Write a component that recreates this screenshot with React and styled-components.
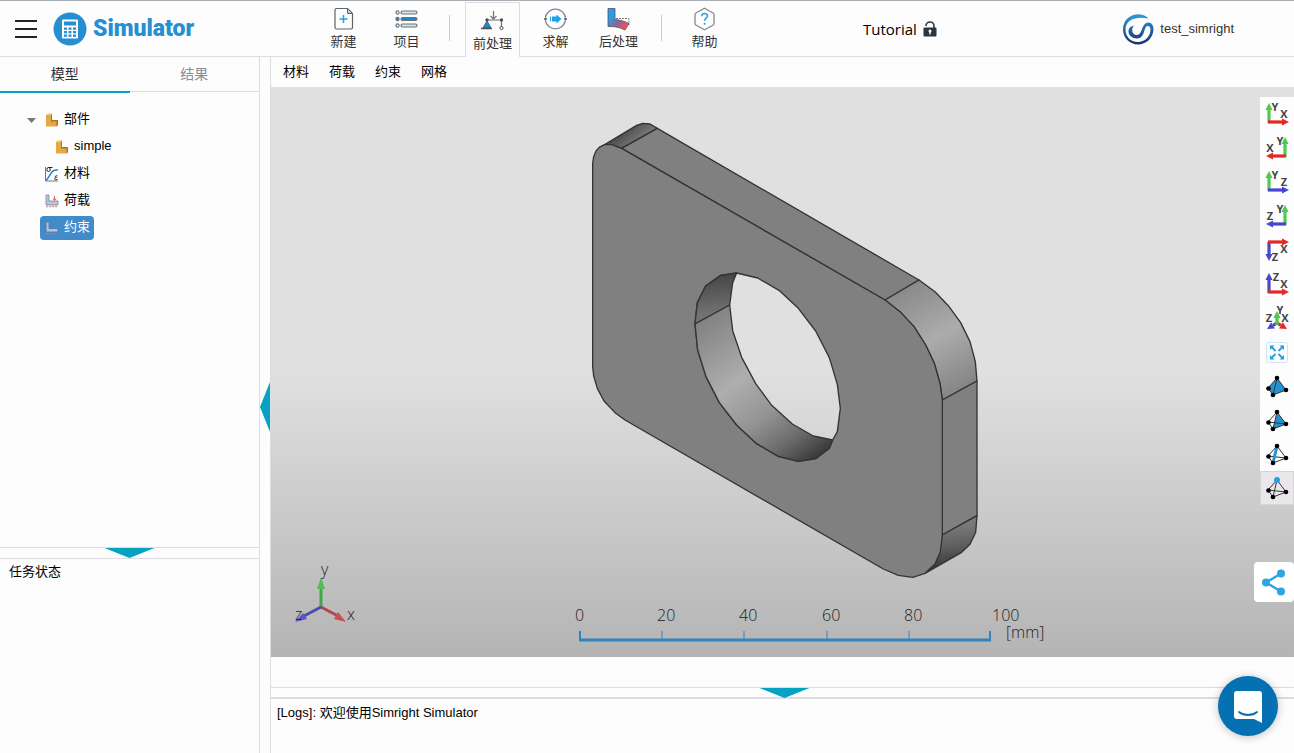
import { useState } from "react";
import styled, { createGlobalStyle, css } from "styled-components";

const colors = {
  accent: "#05a2c2",
  logo: "#268fd1",
  border: "#dcdde0",
  text: "#000000",
  label: "#333333",
  muted: "#868e96",
  selected: "#428bca",
  ruler: "#2f86bf",
  red: "#e32828",
  green: "#4fc94f",
  blue: "#4646cf",
  mesh: "#2592d0",
};

const GlobalStyle = createGlobalStyle`
  * {
    box-sizing: border-box;
  }

  body {
    margin: 0;
    background: #fdfdfd;
    color: ${colors.text};
    font-family: "Liberation Sans", "Noto Sans CJK SC", sans-serif;
    font-size: 13px;
  }

  button {
    margin: 0;
    padding: 0;
    border: 0;
    background: none;
    color: inherit;
    font: inherit;
    cursor: pointer;
  }

  svg {
    display: block;
  }
`;

/* ---------- header icons ---------- */

const NewIcon = () => (
  <svg width="23" height="24" viewBox="0 0 23 24" fill="none">
    <path
      d="M4.500 1.500h11l5 5v14a1.500 1.500 0 0 1-1.500 1.500h-14.500a1.500 1.500 0 0 1-1.500-1.500v-17.500a1.500 1.500 0 0 1 1.500-1.500z"
      stroke="#5b646c"
      strokeWidth="1.200"
    />
    <path d="M15.500 1.500v5h5z" fill="#c9ced2" stroke="#5b646c" />
    <path d="M11.500 8v8M7.500 12h8" stroke="#23a3dd" strokeWidth="1.500" />
  </svg>
);

const ProjectIcon = () => (
  <svg width="23" height="24" viewBox="0 0 23 24">
    {[5.5, 12, 18.5].map((y, i) => (
      <g key={y} stroke="#6b747b" strokeWidth="1.200">
        <circle cx="2.500" cy={y} r="1.600" fill={i === 1 ? "#1b87c6" : "#fff"} />
        <rect
          x="6"
          y={y - 1.5}
          width="16"
          height="3"
          rx="1.500"
          fill={i === 1 ? "#1b87c6" : "#dfe2e4"}
        />
      </g>
    ))}
  </svg>
);

const PreIcon = () => (
  <svg width="23" height="24" viewBox="0 0 23 24" fill="none">
    <path d="M5 11h15.500v8M12.500 2v8M9.500 7l3 3 3-3" stroke="#6b7278" strokeWidth="1.200" />
    <path d="M6 12l4 7H2z" fill="#1e8bcd" stroke="#3c5d75" />
    <path d="M0 19.500h11" stroke="#4b5258" strokeWidth="1.500" />
    <g fill="#4b5258">
      <circle cx="6" cy="11" r="1.700" />
      <circle cx="20.500" cy="11" r="1.700" />
    </g>
    <circle cx="20.500" cy="19" r="1.600" fill="#fff" stroke="#4b5258" />
  </svg>
);

const SolveIcon = () => (
  <svg width="23" height="24" viewBox="0 0 23 24" fill="none">
    <path
      d="M1.300 10.500a10.300 10.300 0 0 1 20.200 0M21.500 13.500a10.300 10.300 0 0 1-20.200 0"
      stroke="#80878d"
      strokeWidth="1.300"
    />
    <circle cx="1.500" cy="12" r="1.300" fill="#4b5258" />
    <circle cx="21.500" cy="12" r="1.300" fill="#4b5258" />
    <path d="M8 9.500h4.500V7.500l5 4.500-5 4.500v-2H8z" fill="#1fa4e3" />
    <path d="M6.500 9.500v5" stroke="#1fa4e3" />
  </svg>
);

const PostIcon = () => (
  <svg width="23" height="24" viewBox="0 0 23 24">
    <defs>
      <linearGradient id="bend" x1="0" y1="0" x2="1" y2="1">
        <stop offset="0.300" stopColor="#2c9be3" />
        <stop offset="0.550" stopColor="#83699b" />
        <stop offset="0.800" stopColor="#e9525c" />
      </linearGradient>
    </defs>
    <path d="M9 11.500h13V18" fill="none" stroke="#777" strokeDasharray="2 1" />
    <path
      d="M1 1.500h7v11c5 .5 9 1.500 14 4l-4 6.500c-6-3-10-3.500-17-3.500z"
      fill="url(#bend)"
      stroke="#56505f"
      strokeWidth="0.800"
    />
  </svg>
);

const HelpIcon = () => (
  <svg width="23" height="24" viewBox="0 0 23 24" fill="none">
    <path
      d="M11.500 1.300l8.300 4.400q1.200.7 1.200 2v8.600q0 1.300-1.200 2l-8.300 4.400-8.300-4.400q-1.200-.7-1.200-2V7.700q0-1.300 1.200-2z"
      stroke="#838a90"
      strokeWidth="1.300"
    />
    <path
      d="M8.700 9.200c0-3.800 5.800-3.600 5.800-.2 0 2-2.900 2.400-2.900 4.800"
      stroke="#23a3dd"
      strokeWidth="1.500"
    />
    <circle cx="11.600" cy="16.700" r="1" fill="#23a3dd" />
  </svg>
);

const SimulatorMark = () => (
  <svg width="34" height="34" viewBox="0 0 34 34">
    <circle cx="17" cy="17" r="16.500" fill={colors.logo} />
    <rect x="9" y="7.500" width="16" height="19" rx="1" fill="#fff" />
    <rect x="11" y="9.500" width="12" height="4" fill={colors.logo} />
    <g fill={colors.logo}>
      {[15.5, 19, 22.5].map((y) =>
        [11, 15.5, 20].map((x) => (
          <rect key={`${x}-${y}`} x={x} y={y} width="3" height="2.300" />
        ))
      )}
    </g>
  </svg>
);

const LockIcon = () => (
  <svg width="14" height="16" viewBox="0 0 14 16">
    <path d="M3 5a4 4 0 0 1 8 0v2" fill="none" stroke="#2b363e" strokeWidth="1.600" />
    <rect x="0.500" y="6.500" width="13" height="9" rx="1" fill="#2b363e" />
    <circle cx="7" cy="10" r="1.500" fill="#fff" />
    <path d="M7 10v3.500" stroke="#fff" strokeWidth="1.300" />
  </svg>
);

const SimrightMark = () => (
  <svg width="32" height="32" viewBox="0 0 32 32">
    <defs>
      <linearGradient id="ring" x1="0" y1="0" x2="0" y2="1">
        <stop offset="0" stopColor="#2d9cdb" />
        <stop offset="1" stopColor="#16306e" />
      </linearGradient>
    </defs>
    <path
      d="M26.500 5.500C18-3 1 2 1 16.500 1 25 8 31.500 16 31.500S31.500 25 31.500 16c0-3.500-2-6.500-5-6.500-7.500 0-5.500 12.500-11.500 12.500-3.500 0-5.500-3-4.500-7l1.500-2.500c-4 1-5.500 3-5.500 6 0 4 4 7 8.500 7 8.500 0 6.500-12.500 10.500-12.500 2 0 3 1.500 3 3.500 0 7-6 12.500-12.500 12.500C8.500 29 3.500 23.500 3.500 16.500 3.500 6 15 3 26.500 5.500z"
      fill="url(#ring)"
    />
  </svg>
);

/* ---------- tree icons ---------- */

const PartIcon = () => (
  <svg width="14" height="14" viewBox="0 0 14 14">
    <path d="M1 2l2-1.500h4V7h6v5l-1.500 1.500H1z" fill="#e6a745" />
    <path d="M1 2h5l1-1.500H3z" fill="#f7d58f" />
    <path d="M6 2l1-1.500V7l-1 1.500zM6 8.500L7 7h6l-1.500 1.500zM11.500 8.500L13 7v5l-1.500 1.500z" fill="#a8742a" />
  </svg>
);

const MaterialIcon = () => (
  <svg width="15" height="16" viewBox="0 0 15 16" fill="none">
    <path d="M1.500 1v14H14" stroke="#777" />
    <path d="M2 14.500C7 9 7 3 14 4" stroke="#2a7fd0" strokeWidth="1.500" />
    <ellipse cx="4.500" cy="3.500" rx="1.700" ry="2" stroke="#222" />
    <path d="M4.500 1.500H8.500M13.500 10c-2.500-1-3 1.500-1 1.500-2.500 0-3 3 1 2" stroke="#222" />
  </svg>
);

const LoadIcon = () => (
  <svg width="14" height="14" viewBox="0 0 14 14">
    <path d="M1 1h3v6h9v4H1z" fill="#b4c5de" stroke="#7d8598" strokeWidth="0.800" />
    <path d="M9.500 2v4M8 4.500l1.500 2 1.500-2" fill="none" stroke="#d0606a" />
    <path d="M1 12.500h12" stroke="#d79a9f" strokeWidth="1.500" strokeDasharray="2 1" />
  </svg>
);

const ConstraintIcon = () => (
  <svg width="14" height="14" viewBox="0 0 14 14">
    <path d="M1 1h3v6.500h9v3.500H1z" fill="#a9c4e6" stroke="#5e6f8e" strokeWidth="0.800" />
    <path d="M1 12.500h12" stroke="#a9848f" strokeWidth="1.500" strokeDasharray="2 1" />
  </svg>
);

const CaretIcon = () => (
  <svg width="9" height="5" viewBox="0 0 9 5">
    <path d="M0 0h9L4.500 5z" fill="#777" />
  </svg>
);

/* ---------- view toolbar icons ---------- */

const Arrow = ({ from, to, color }) => {
  const [x1, y1] = from;
  const [x2, y2] = to;
  const len = Math.hypot(x2 - x1, y2 - y1);
  const ux = (x2 - x1) / len;
  const uy = (y2 - y1) / len;
  const bx = x2 - ux * 7;
  const by = y2 - uy * 7;
  return (
    <g fill={color} stroke={color}>
      <path d={`M${x1} ${y1}L${bx} ${by}`} strokeWidth="3.200" />
      <path
        stroke="none"
        d={`M${x2} ${y2}L${bx - uy * 3.6} ${by + ux * 3.6}L${bx + uy * 3.6} ${by - ux * 3.6}z`}
      />
    </g>
  );
};

const AxisIcon = ({ arrows, letters }) => (
  <svg width="34" height="34" viewBox="0 0 34 34">
    {arrows.map((arrow, i) => (
      <Arrow key={i} {...arrow} />
    ))}
    {letters.map(([letter, x, y]) => (
      <AxisLetter key={letter} x={x} y={y}>
        {letter}
      </AxisLetter>
    ))}
  </svg>
);

const FitIcon = () => (
  <svg width="34" height="34" viewBox="0 0 34 34">
    <rect x="6.500" y="7.500" width="21" height="20" rx="2" fill="#fbfdff" stroke="#cfe4f5" />
    <path
      d="M11 11.500l4.500 4.500M23 11.500L18.500 16M11 23.500l4.500-4.500M23 23.500L18.500 19"
      stroke="#2b9ddb"
      strokeWidth="1.800"
    />
    <path
      d="M10 10.500h4.500l-4.500 4.500zM24 10.500h-4.500l4.500 4.500zM10 24.500h4.500l-4.500-4.500zM24 24.500h-4.500l4.500-4.500z"
      fill="#2b9ddb"
    />
  </svg>
);

const MeshIcon = ({ kind }) => (
  <svg width="34" height="34" viewBox="0 0 34 34">
    {kind === "solid" && <path d="M17 9L8 19l5 7 13-5z" fill={colors.mesh} />}
    {kind === "face" && <path d="M17 9l-4 17 13-5z" fill={colors.mesh} />}
    <g stroke="#333" fill="none">
      <path d="M17 9L8 19l5 7 13-5zM17 9l-4 17" />
      {kind !== "solid" && <path d="M8 19l18 2" />}
    </g>
    {kind === "edge" && <path d="M17 9l-4 17" stroke={colors.mesh} strokeWidth="3" />}
    <circle cx="17" cy="9" r={kind === "node" ? 3 : 2.3} fill={kind === "node" ? "#2a9fe0" : "#000"} />
    <circle cx="8.500" cy="19.500" r="2.300" />
    <circle cx="26" cy="21" r="2.300" />
    <circle cx="13" cy="26" r="2.300" />
  </svg>
);

const ShareIcon = () => (
  <svg width="40" height="40" viewBox="0 0 40 40" fill="#2ba6e0">
    <path d="M27 11.500L12 20.500l15 9" fill="none" stroke="#2ba6e0" strokeWidth="2.500" />
    <circle cx="27" cy="11.500" r="4" />
    <circle cx="12" cy="20.500" r="4" />
    <circle cx="27" cy="29.500" r="4" />
  </svg>
);

const ChatIcon = () => (
  <svg width="60" height="60" viewBox="0 0 60 60">
    <path d="M19 15h22a3 3 0 0 1 3 3v29l-8-4H19a3 3 0 0 1-3-3V18a3 3 0 0 1 3-3z" fill="#fff" />
    <path d="M21 36c5 4 13 4 18 0" fill="none" stroke="#0571b3" strokeWidth="1.800" strokeLinecap="round" />
  </svg>
);

/* ---------- scene ---------- */

const PartModel = () => (
  <svg width="395" height="460" viewBox="45 60 1185 1380">
    <defs>
      <linearGradient id="cornerTop" gradientUnits="userSpaceOnUse" x1="160" y1="85" x2="195" y2="130">
        <stop offset="0" stopColor="#464646" />
        <stop offset="1" stopColor="#777777" />
      </linearGradient>
      <linearGradient id="cornerRight" gradientUnits="userSpaceOnUse" x1="1000" y1="570" x2="1170" y2="870">
        <stop offset="0" stopColor="#8b8a8b" />
        <stop offset="0.500" stopColor="#acacac" />
        <stop offset="1" stopColor="#868586" />
      </linearGradient>
      <linearGradient id="cornerBottom" gradientUnits="userSpaceOnUse" x1="1150" y1="1280" x2="1165" y2="1385">
        <stop offset="0" stopColor="#7a797a" />
        <stop offset="0.600" stopColor="#5d5c5d" />
        <stop offset="1" stopColor="#3f3f3f" />
      </linearGradient>
      <linearGradient id="holeTop" gradientUnits="userSpaceOnUse" x1="425" y1="530" x2="435" y2="640">
        <stop offset="0" stopColor="#484748" />
        <stop offset="1" stopColor="#737273" />
      </linearGradient>
      <linearGradient id="holeWall" gradientUnits="userSpaceOnUse" x1="420" y1="640" x2="730" y2="1070">
        <stop offset="0" stopColor="#828182" />
        <stop offset="0.400" stopColor="#aeaeae" />
        <stop offset="0.650" stopColor="#959495" />
        <stop offset="0.850" stopColor="#6c6b6c" />
        <stop offset="1" stopColor="#3e3d3e" />
      </linearGradient>
    </defs>
    <g stroke="#333333" strokeWidth="4" strokeLinejoin="round" fill="#808080">
      <path
        d="M88 143L104 134 200 76 218 70 240 72 262 85 155 145 125 134z"
        fill="url(#cornerTop)"
      />
      <path d="M155 145L262 85 1047 540 945 600z" />
      <path
        d="M945 600L1047 540 1095 575 1135 617 1172 668 1200 725 1216 785 1221 843 1117 900 1110 850 1093 790 1067 735 1032 680 990 635z"
        fill="url(#cornerRight)"
      />
      <path d="M1117 900L1221 843V1247L1117 1305z" />
      <path
        d="M1117 1305L1221 1247 1217 1297 1200 1333 1175 1357 1065 1420 1095 1392 1110 1350z"
        fill="url(#cornerBottom)"
      />
      <path
        fillRule="evenodd"
        d="M68 190L71 170 78 153 88 142 104 134 125 134 155 145 945 600 990 635 1032 680 1067 735 1093 790 1110 850 1117 900V1305L1111 1355 1095 1392 1065 1420 1028 1432 985 1426 940 1407 165 960 135 938 102 903 82 865 71 828 68 800z
        M375 672L383 750 408 830 448 908 500 975 560 1031 625 1069 685 1084 737 1076 778 1045 788 1020 802 995 811 925 802 853 778 773 737 693 685 625 627 571 563 534 500 519 452 526 407 558 382 608z"
      />
      <path d="M375 672L382 608 407 558 452 526 500 519 488 548 479 615z" fill="url(#holeTop)" />
      <path
        d="M375 672L479 615 488 692 515 772 557 851 605 916 667 972 730 1008 788 1020 778 1045 737 1076 685 1084 625 1069 560 1031 500 975 448 908 408 830 383 750z"
        fill="url(#holeWall)"
      />
    </g>
  </svg>
);

const TriadModel = () => (
  <svg width="76" height="76" viewBox="0 -10 76 76">
    <path d="M31 46V24" stroke="#44a64c" strokeWidth="3" />
    <path d="M31 16l4 12h-8z" fill="#52bd56" />
    <path d="M31 46l17 9" stroke="#b24848" strokeWidth="3" />
    <path d="M56 61l-12-3 4-7z" fill="#c85050" />
    <path d="M31 46l-17 9" stroke="#4c4cae" strokeWidth="3" />
    <path d="M5 61l12-3-4-6z" fill="#5858c4" />
    <SceneText x="31" y="14">y</SceneText>
    <SceneText x="5" y="59">z</SceneText>
    <SceneText x="57" y="59">x</SceneText>
  </svg>
);

const marks = [
  { value: 0, tick: 70, x: 65 },
  { value: 20, tick: 152, x: 147 },
  { value: 40, tick: 234, x: 229 },
  { value: 60, tick: 317, x: 312 },
  { value: 80, tick: 399, x: 394 },
  { value: 100, tick: 480, x: 482 },
];

const RulerScale = () => (
  <svg width="545" height="48" viewBox="0 0 545 48">
    <path d="M69 40H481" stroke={colors.ruler} strokeWidth="3" />
    {marks.map(({ value, tick, x }) => (
      <g key={value}>
        <path
          d={`M${tick} 31v9`}
          stroke={colors.ruler}
          strokeWidth={value % 100 === 0 ? 2 : 1}
        />
        <SceneText x={x} y="21">{value}</SceneText>
      </g>
    ))}
    <SceneText x="496" y="38">[mm]</SceneText>
  </svg>
);

/* ---------- data ---------- */

const navItems = [
  { label: "新建", icon: <NewIcon /> },
  { label: "项目", icon: <ProjectIcon />, divided: true },
  { label: "前处理", icon: <PreIcon />, active: true },
  { label: "求解", icon: <SolveIcon /> },
  { label: "后处理", icon: <PostIcon />, divided: true },
  { label: "帮助", icon: <HelpIcon /> },
];

const menuItems = ["材料", "荷载", "约束", "网格"];

const treeItems = [
  { label: "部件", icon: <PartIcon />, open: true },
  { label: "simple", icon: <PartIcon />, nested: true },
  { label: "材料", icon: <MaterialIcon /> },
  { label: "荷载", icon: <LoadIcon /> },
  { label: "约束", icon: <ConstraintIcon /> },
];

const { red, green, blue } = colors;

const viewTools = [
  {
    name: "XY",
    icon: (
      <AxisIcon
        arrows={[
          { from: [9, 26], to: [9, 6], color: green },
          { from: [8, 25], to: [29, 25], color: red },
        ]}
        letters={[["Y", 15, 14], ["X", 24, 21]]}
      />
    ),
  },
  {
    name: "-XY",
    icon: (
      <AxisIcon
        arrows={[
          { from: [25, 26], to: [25, 6], color: green },
          { from: [26, 25], to: [6, 25], color: red },
        ]}
        letters={[["Y", 20, 14], ["X", 10, 21]]}
      />
    ),
  },
  {
    name: "ZY",
    icon: (
      <AxisIcon
        arrows={[
          { from: [9, 26], to: [9, 6], color: green },
          { from: [8, 25], to: [29, 25], color: blue },
        ]}
        letters={[["Y", 15, 14], ["Z", 24, 21]]}
      />
    ),
  },
  {
    name: "-ZY",
    icon: (
      <AxisIcon
        arrows={[
          { from: [25, 26], to: [25, 6], color: green },
          { from: [26, 25], to: [6, 25], color: blue },
        ]}
        letters={[["Y", 20, 14], ["Z", 10, 21]]}
      />
    ),
  },
  {
    name: "X-Z",
    icon: (
      <AxisIcon
        arrows={[
          { from: [9, 9], to: [9, 28], color: blue },
          { from: [8, 9], to: [29, 9], color: red },
        ]}
        letters={[["X", 24, 20], ["Z", 15, 28]]}
      />
    ),
  },
  {
    name: "XZ",
    icon: (
      <AxisIcon
        arrows={[
          { from: [9, 26], to: [9, 6], color: blue },
          { from: [8, 25], to: [29, 25], color: red },
        ]}
        letters={[["Z", 16, 14], ["X", 24, 21]]}
      />
    ),
  },
  {
    name: "XYZ",
    icon: (
      <AxisIcon
        arrows={[
          { from: [17, 22], to: [7, 28], color: blue },
          { from: [17, 22], to: [27, 28], color: red },
          { from: [17, 24], to: [17, 10], color: green },
        ]}
        letters={[["Y", 20, 13], ["Z", 9, 21], ["X", 25, 21]]}
      />
    ),
  },
  { name: "fit", icon: <FitIcon /> },
  { name: "solid", icon: <MeshIcon kind="solid" /> },
  { name: "face", icon: <MeshIcon kind="face" /> },
  { name: "edge", icon: <MeshIcon kind="edge" /> },
  { name: "node", icon: <MeshIcon kind="node" /> },
];

const App = () => {
  const [tab, setTab] = useState("模型");
  const [selected, setSelected] = useState("约束");
  const [tool, setTool] = useState("node");

  return (
    <Page>
      <GlobalStyle />
      <Header>
        <Brand>
          <MenuButton aria-label="menu">
            <MenuLine />
            <MenuLine />
            <MenuLine />
          </MenuButton>
          <SimulatorMark />
          <BrandName>Simulator</BrandName>
        </Brand>
        <Nav>
          {navItems.map(({ label, icon, active, divided }) => (
            <NavGroup key={label}>
              <NavItem $active={active}>
                {icon}
                <span>{label}</span>
              </NavItem>
              {divided && <NavDivider />}
            </NavGroup>
          ))}
        </Nav>
        <Title>
          Tutorial
          <LockIcon />
        </Title>
        <User>
          <SimrightMark />
          test_simright
        </User>
      </Header>
      <Body>
        <Sidebar>
          <Tabs>
            {["模型", "结果"].map((name) => (
              <Tab key={name} $active={tab === name} onClick={() => setTab(name)}>
                {name}
              </Tab>
            ))}
          </Tabs>
          <Tree>
            {treeItems.map(({ label, icon, open, nested }) => (
              <TreeRow key={label} $nested={nested}>
                <Caret>{open && <CaretIcon />}</Caret>
                <TreeNode $selected={selected === label} onClick={() => setSelected(label)}>
                  <TreeIcon>{icon}</TreeIcon>
                  <TreeLabel>{label}</TreeLabel>
                </TreeNode>
              </TreeRow>
            ))}
          </Tree>
          <RowSplitter>
            <Collapse $to="down" aria-label="collapse" />
          </RowSplitter>
          <Tasks>任务状态</Tasks>
        </Sidebar>
        <ColumnSplitter>
          <Collapse $to="left" aria-label="collapse" />
        </ColumnSplitter>
        <Main>
          <Menu>
            {menuItems.map((name) => (
              <button key={name}>{name}</button>
            ))}
          </Menu>
          <Viewport>
            <PartModel />
            <Triad>
              <TriadModel />
            </Triad>
            <Ruler>
              <RulerScale />
            </Ruler>
            <ViewTools>
              {viewTools.map(({ name, icon }) => (
                <ViewTool
                  key={name}
                  aria-label={name}
                  $active={tool === name}
                  onClick={() => setTool(name)}
                >
                  {icon}
                </ViewTool>
              ))}
            </ViewTools>
            <Share aria-label="share">
              <ShareIcon />
            </Share>
          </Viewport>
          <Status />
          <RowSplitter $wide>
            <Collapse $to="down" aria-label="collapse" />
          </RowSplitter>
          <Logs>[Logs]: 欢迎使用Simright Simulator</Logs>
        </Main>
      </Body>
      <Chat aria-label="chat">
        <ChatIcon />
      </Chat>
    </Page>
  );
};

const Page = styled.div`
  display: flex;
  flex-direction: column;
  height: 100vh;
  min-height: 600px;
`;

const Header = styled.header`
  display: flex;
  flex: none;
  height: 57px;
  border-top: 1px solid #a9aeb4;
  border-bottom: 1px solid ${colors.border};
`;

const Brand = styled.div`
  display: flex;
  align-items: center;
  width: 312px;
  padding-left: 15px;
`;

const MenuButton = styled.button`
  display: flex;
  flex-direction: column;
  gap: 6px;
  width: 22px;
  margin-right: 16px;
`;

const MenuLine = styled.span`
  height: 2px;
  background: #222;
`;

const BrandName = styled.span`
  margin-left: 6px;
  color: ${colors.logo};
  font-family: Roboto, "Liberation Sans", sans-serif;
  font-size: 23px;
  font-weight: 900;
`;

const Nav = styled.nav`
  display: flex;
`;

const NavGroup = styled.div`
  display: flex;
`;

const NavItem = styled.button`
  display: flex;
  flex-direction: column;
  align-items: center;
  width: 63px;
  padding-top: 6px;
  color: ${colors.label};
  line-height: 22px;

  ${({ $active }) =>
    $active &&
    css`
      width: 55px;
      margin: 1px 4px -1px;
      border: 1px solid ${colors.border};
      border-bottom: 0;
      background: #fdfdfd;
    `}
`;

const NavDivider = styled.span`
  width: 1px;
  height: 26px;
  margin: 14px 11px 0;
  background: #cccccc;
`;

const Title = styled.div`
  display: flex;
  flex: 1;
  align-items: center;
  gap: 6px;
  padding-left: 127px;
  font-family: "Open Sans", sans-serif;
  font-size: 15px;
`;

const User = styled.div`
  display: flex;
  align-items: center;
  gap: 6px;
  padding-right: 60px;
  color: ${colors.label};
`;

const Body = styled.div`
  display: flex;
  flex: 1;
  min-height: 0;
`;

const Sidebar = styled.aside`
  display: flex;
  flex: none;
  flex-direction: column;
  width: 260px;
  border-right: 1px solid ${colors.border};
`;

const Tabs = styled.div`
  display: flex;
  align-items: flex-start;
  height: 36px;
`;

const Tab = styled.button`
  flex: 1;
  height: ${({ $active }) => ($active ? "36px" : "35px")};
  padding-bottom: 2px;
  border-bottom: ${({ $active }) =>
    $active ? `2px solid ${colors.accent}` : `1px solid ${colors.border}`};
  color: ${({ $active }) => ($active ? colors.label : colors.muted)};
  font-size: 14px;
`;

const Tree = styled.ul`
  flex: 1;
  margin: 0;
  padding: 12px 0 0 27px;
  list-style: none;
`;

const TreeRow = styled.li`
  display: flex;
  align-items: flex-end;
  height: 27px;
  padding-left: ${({ $nested }) => ($nested ? "10px" : "0")};
`;

const Caret = styled.span`
  display: flex;
  align-items: center;
  width: 13px;
  height: 24px;
`;

const TreeNode = styled.button`
  display: flex;
  align-items: center;
  gap: 5px;
  height: 24px;
  padding: 0 4px;
  border-radius: 4px;

  ${({ $selected }) =>
    $selected &&
    css`
      background: ${colors.selected};
      color: #fff;
    `}
`;

const TreeIcon = styled.span`
  display: flex;
  justify-content: center;
  width: 15px;
`;

const TreeLabel = styled.span`
  height: 24px;
  line-height: 22px;
`;

const RowSplitter = styled.div`
  display: flex;
  flex: none;
  justify-content: center;
  height: 12px;
  padding-left: ${({ $wide }) => ($wide ? "4px" : "0")};
  border-top: 1px solid ${colors.border};
  border-bottom: ${({ $wide }) => ($wide ? "2px" : "1px")} solid ${colors.border};
`;

const ColumnSplitter = styled.div`
  display: flex;
  flex: none;
  align-items: center;
  width: 11px;
  padding-top: 4px;
  border-right: 1px solid ${colors.border};
`;

const Collapse = styled.button`
  background: ${colors.accent};

  ${({ $to }) =>
    $to === "down"
      ? css`
          width: 50px;
          height: 10px;
          clip-path: polygon(0 0, 100% 0, 50% 100%);
        `
      : css`
          width: 10px;
          height: 50px;
          clip-path: polygon(100% 0, 100% 100%, 0 50%);
        `}
`;

const Tasks = styled.div`
  height: 194px;
  padding: 2px 9px;
  line-height: 22px;
`;

const Main = styled.main`
  display: flex;
  flex: 1;
  flex-direction: column;
  min-width: 0;
`;

const Menu = styled.div`
  display: flex;
  flex: none;
  gap: 20px;
  height: 30px;
  padding: 0 12px 4px;
`;

const Viewport = styled.section`
  position: relative;
  display: grid;
  flex: 1;
  place-items: center;
  padding-bottom: 44px;
  background: linear-gradient(#e0e0e0 50%, #b4b4b4);
`;

const Triad = styled.div`
  position: absolute;
  bottom: 30px;
  left: 19px;
`;

const Ruler = styled.div`
  position: absolute;
  right: 0;
  bottom: 9px;
  left: 0;
  display: flex;
  justify-content: center;
`;

const SceneText = styled.text`
  fill: #222;
  font-family: "Open Sans", sans-serif;
  font-size: 16px;
  font-weight: 300;
`;

const AxisLetter = styled.text`
  fill: #444;
  font-family: "Open Sans", sans-serif;
  font-size: 11px;
  font-weight: 700;
  text-anchor: middle;
`;

const ViewTools = styled.div`
  position: absolute;
  top: 10px;
  right: 0;
  display: flex;
  flex-direction: column;
  background: #fdfdfd;
`;

const ViewTool = styled.button`
  width: 34px;
  height: 34px;
  background: ${({ $active }) => ($active ? "#e9e7ea" : "none")};
  box-shadow: ${({ $active }) => ($active ? "inset 0 0 0 1px #d6d4d7" : "none")};
`;

const Share = styled.button`
  position: absolute;
  right: 0;
  bottom: 55px;
  border-radius: 4px;
  background: #fff;
`;

const Status = styled.div`
  flex: none;
  height: 30px;
`;

const Logs = styled.div`
  flex: none;
  height: 54px;
  padding: 4px 6px;
  line-height: 20px;
`;

const Chat = styled.button`
  position: fixed;
  right: 16px;
  bottom: 17px;
  border-radius: 50%;
  background: #0571b3;
  box-shadow: 0 1px 8px rgba(0, 0, 0, 0.25);
`;

export default App;
